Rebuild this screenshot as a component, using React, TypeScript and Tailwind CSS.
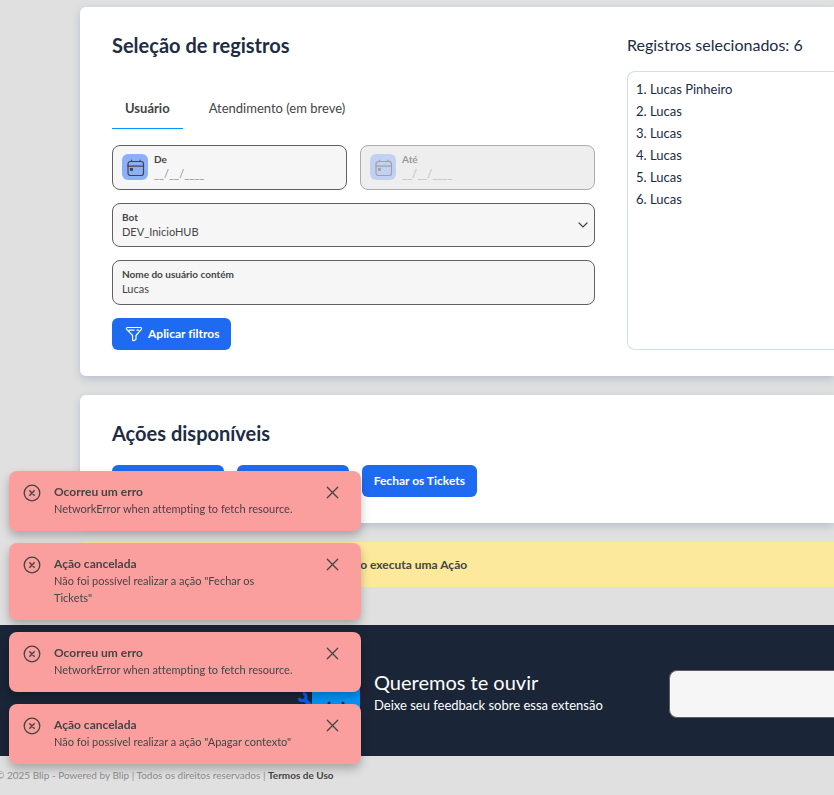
import React, { ReactNode } from 'react';

const records = ['Lucas Pinheiro', 'Lucas', 'Lucas', 'Lucas', 'Lucas', 'Lucas'];

const toasts = [
  { title: 'Ocorreu um erro', text: 'NetworkError when attempting to fetch resource.' },
  { title: 'Ação cancelada', text: 'Não foi possível realizar a ação "Fechar os\nTickets"' },
  { title: 'Ocorreu um erro', text: 'NetworkError when attempting to fetch resource.' },
  { title: 'Ação cancelada', text: 'Não foi possível realizar a ação "Apagar contexto"' },
];

const CalendarIcon = () => (
  <svg viewBox="0 0 26 26" className="h-[26px] w-[26px] shrink-0 rounded-md bg-[#8cb0f5]" fill="none" stroke="#454545" strokeWidth="1.2" strokeLinecap="round">
    <rect x="6" y="7.5" width="15.5" height="14" rx="2.5" />
    <path d="M6 12.2h15.5M9.5 6v1.5M18 6v1.5" />
    <rect x="8.5" y="14.5" width="1.8" height="1.8" fill="#454545" />
  </svg>
);

const FunnelIcon = () => (
  <svg viewBox="-1 0 20 16" className="h-4 w-5" fill="none" stroke="white" strokeWidth="1.2" strokeLinecap="round" strokeLinejoin="round">
    <path d="M2.5 1.5h13c1 0 1.4 1 .8 1.8L11 9.5v3.5c0 .5-.3.8-.8 1l-1.5.6c-.6.2-1.1-.1-1.1-.8V9.5L1.7 3.3c-.6-.8-.2-1.8.8-1.8z" />
    <path d="M4 4.2h5M12 4.2h1.5" />
  </svg>
);

const ChevronIcon = () => (
  <svg viewBox="0 0 10 6" className="pointer-events-none absolute top-1/2 right-1.5 h-1.5 w-2.5 -translate-y-1/2" fill="none" stroke="#454545" strokeWidth="1.2" strokeLinecap="round">
    <path d="M1 1l4 4 4-4" />
  </svg>
);

const Panel = ({ children }: { children: ReactNode }) => (
  <section className="rounded-l-md bg-white pt-6 pb-[26px] pl-8 shadow-[0_3px_8px_rgba(90,115,165,0.3)]">{children}</section>
);

interface DateFieldProps {
  id: string;
  label: string;
  disabled?: boolean;
}

const DateField: React.FC<DateFieldProps> = ({ id, label, disabled }) => (
  <div
    className={`flex h-[45px] min-w-0 flex-1 items-center gap-1.5 rounded-lg border px-[9px] pb-0.5 ${
      disabled ? 'border-[#ababab] bg-[#eeeeee]' : 'border-[#606060] bg-[#f6f6f6]'
    }`}
  >
    <div className={disabled ? 'opacity-45' : ''}>
      <CalendarIcon />
    </div>
    <div className={`flex min-w-0 flex-1 flex-col ${disabled ? 'opacity-50' : ''}`}>
      <label htmlFor={id} className="text-[10px] leading-[14px] font-bold">
        {label}
      </label>
      <input id={id} type="text" placeholder="__/__/____" disabled={disabled} className="w-full text-[11px] leading-4 outline-none placeholder:text-[#8c8c8c]" />
    </div>
  </div>
);

const ActionButton = ({ children }: { children: ReactNode }) => (
  <button type="button" className="flex h-8 items-center justify-center gap-1 rounded-md bg-[#1e6bf1] px-3 text-[12px] font-bold whitespace-nowrap text-white">
    {children}
  </button>
);

const Toast = ({ title, text }: { title: string; text: string }) => (
  <div className="flex items-start rounded-lg bg-[#fa9f9e] pt-3 pr-[22px] pb-3.5 pl-3.5 shadow-[0_5px_10px_rgba(0,0,0,0.25)]">
    <svg viewBox="0 0 18 18" className="mt-px mr-[13px] h-[18px] w-[18px] shrink-0" fill="none" stroke="#454545" strokeWidth="1.3" strokeLinecap="round">
      <circle cx="9" cy="9" r="7.8" />
      <path d="M6.8 6.8l4.4 4.4M11.2 6.8l-4.4 4.4" strokeWidth="1.5" />
    </svg>
    <div className="min-w-0 flex-1 leading-[17px]">
      <p className="text-[12px] leading-[17px] font-bold">{title}</p>
      <p className="text-[11px] leading-[17px] whitespace-pre-line">{text}</p>
    </div>
    <button type="button" aria-label="Fechar" className="mt-[3px]">
      <svg viewBox="0 0 13 13" className="h-[13px] w-[13px]" fill="none" stroke="#454545" strokeWidth="1.3" strokeLinecap="round">
        <path d="M1.3 1.3l10.4 10.4M11.7 1.3L1.3 11.7" />
      </svg>
    </button>
  </div>
);

const Robot = () => (
  <svg viewBox="0 0 64 64" className="h-16 w-16 shrink-0" fill="none">
    <path d="M22 24h34a7 7 0 0 1 7 7v23H15V31a7 7 0 0 1 7-7z" fill="#0096fa" />
    <path d="M6 34.5a3.6 3.6 0 1 1-4 4.5" stroke="#0760f5" strokeWidth="3" />
    <path d="M8 41l6 6" stroke="#0760f5" strokeWidth="4" />
    <circle cx="32" cy="44" r="1.5" fill="#1a2537" />
    <circle cx="46" cy="44" r="1.5" fill="#1a2537" />
  </svg>
);

export default function App() {
  return (
    <div className="min-h-screen overflow-hidden bg-[#e0e0e0] font-['Lato',sans-serif] text-[#454545] [font-variant-ligatures:none]">
      <main className="flex flex-col gap-[19px] pt-[7px] pb-[38px] pl-20">
        <Panel>
          <div className="flex gap-8">
            <div className="w-[483px] shrink-0">
              <h2 className="text-[20px] leading-7 font-bold text-[#202c44]">Seleção de registros</h2>
              <div role="tablist" className="mt-[30px] flex gap-[13px] text-[13px]">
                <button type="button" role="tab" aria-selected="true" className="h-10 border-b border-[#0096fa] px-[13px] font-bold">
                  Usuário
                </button>
                <button type="button" role="tab" aria-selected="false" className="h-10 px-[13px]">
                  Atendimento (em breve)
                </button>
              </div>
              <form className="mt-4 flex flex-col items-start gap-[13px]">
                <div className="flex w-full gap-[13px]">
                  <DateField id="from" label="De" />
                  <DateField id="until" label="Até" disabled />
                </div>
                <div className="relative flex h-11 w-full flex-col justify-center rounded-lg border border-[#606060] bg-[#f6f6f6] px-[9px]">
                  <label htmlFor="bot" className="text-[10px] leading-[14px] font-bold">
                    Bot
                  </label>
                  <select id="bot" className="w-full appearance-none text-[11px] leading-4 outline-none">
                    <option>DEV_InicioHUB</option>
                  </select>
                  <ChevronIcon />
                </div>
                <div className="flex h-[45px] w-full flex-col justify-center rounded-lg border border-[#606060] bg-[#f6f6f6] px-[9px] pb-0.5">
                  <label htmlFor="name" className="text-[10px] leading-[14px] font-bold">
                    Nome do usuário contém
                  </label>
                  <input id="name" type="text" defaultValue="Lucas" className="w-full text-[11px] leading-4 outline-none" />
                </div>
                <ActionButton>
                  <FunnelIcon />
                  Aplicar filtros
                </ActionButton>
              </form>
            </div>
            <div className="flex min-w-0 flex-1 flex-col text-[#202c44]">
              <h3 className="text-[16px] leading-7">Registros selecionados: 6</h3>
              <ol className="mt-3 flex-1 rounded-l-lg border border-r-0 border-[#d2dfe6] px-2 py-1.5 text-[13px] leading-[22px]">
                {records.map((name, i) => (
                  <li key={i}>
                    {i + 1}. {name}
                  </li>
                ))}
              </ol>
            </div>
          </div>
        </Panel>

        <Panel>
          <h2 className="text-[20px] leading-7 font-bold text-[#202c44]">Ações disponíveis</h2>
          <div className="mt-[18px] flex gap-[13px]">
            <ActionButton>Apagar contexto</ActionButton>
            <ActionButton>Alterar contexto</ActionButton>
            <ActionButton>Fechar os Tickets</ActionButton>
          </div>
        </Panel>

        <div role="alert" className="flex h-[45px] items-center rounded-l-md bg-[#fce99b] pl-[55px] text-[12px] font-bold">
          Não feche ou recarregue a página enquanto executa uma Ação
        </div>
      </main>

      <footer>
        <div className="flex h-[131px] items-center bg-[#1a2537] pl-[297px] text-white">
          <Robot />
          <div className="ml-[13px] w-[295px] shrink-0">
            <p className="text-[20px] leading-7">Queremos te ouvir</p>
            <p className="text-[13px] leading-[18px]">Deixe seu feedback sobre essa extensão</p>
          </div>
          <input aria-label="Feedback" type="text" className="mt-1.5 h-12 min-w-0 flex-1 rounded-l-lg border border-r-0 border-[#606060] bg-[#f6f6f6] px-3 text-[#454545]" />
        </div>
        <p className="-ml-1 pt-3 text-[10px] leading-[14px] text-[#8c8c8c]">
          © 2025 Blip - Powered by Blip | Todos os direitos reservados |{' '}
          <a href="#termos" className="font-bold text-[#454545]">
            Termos de Uso
          </a>
        </p>
      </footer>

      <div className="fixed bottom-[31px] left-[9px] flex w-[352px] flex-col gap-3">
        {toasts.map((toast, i) => (
          <Toast key={i} title={toast.title} text={toast.text} />
        ))}
      </div>
    </div>
  );
}
